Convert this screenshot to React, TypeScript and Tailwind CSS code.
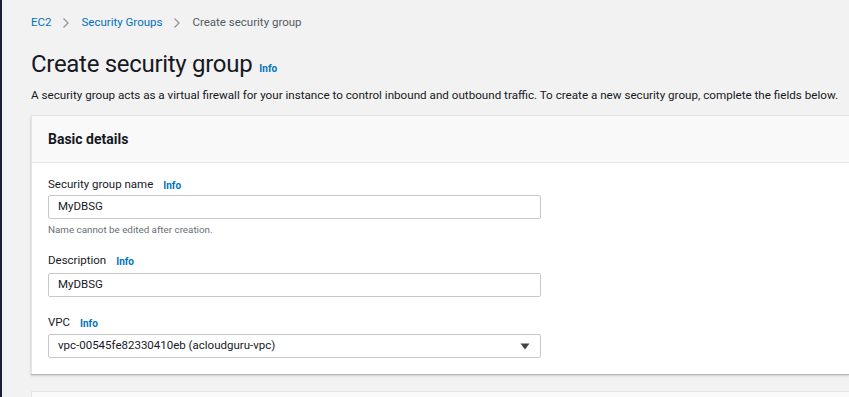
import React from "react";

function Info({ className = "" }: { className?: string }) {
  return (
    <span className={"text-[#0073bb] font-bold text-[10px] " + className}>Info</span>
  );
}

function Chevron() {
  return (
    <svg width="8" height="12" viewBox="0 0 8 12" className="mx-[11px]">
      <path d="M1.5 1.5 L6 6 L1.5 10.5" fill="none" stroke="#8d9399" strokeWidth="1.2" />
    </svg>
  );
}

export default function App() {
  return (
    <div className="h-[397px] w-[849px] overflow-hidden bg-[#f2f2f2] border-l-2 border-[#1b1b3a] font-['Roboto',sans-serif] text-[#16191f]">
      <div className="pl-[29px] pt-[15px]">
        <div className="flex items-center h-[16px] text-[11.5px]">
          <span className="text-[#0073bb]">EC2</span>
          <Chevron />
          <span className="text-[#0073bb]">Security Groups</span>
          <Chevron />
          <span className="text-[#545b64]">Create security group</span>
        </div>
        <div className="flex items-baseline mt-[19px] h-[28px]">
          <h1 className="text-[24px] leading-[28px] tracking-[-0.3px]">Create security group</h1>
          <Info className="ml-[7px]" />
        </div>
        <p className="mt-[9px] text-[11.65px] leading-[16px] text-[#16191f] whitespace-nowrap">
          A security group acts as a virtual firewall for your instance to control inbound and outbound traffic. To create a new security group, complete the fields below.
        </p>
        <div className="mt-[12px] bg-white border-l border-t border-[#e4e4e4] shadow-[0_1px_1px_#b5b5b5,0_2px_3px_rgba(0,0,0,0.12)]">
          <div className="h-[47px] bg-[#f9f9f9] border-b border-[#e6e6e6] flex items-center pl-[16px]">
            <h2 className="text-[14px] font-bold">Basic details</h2>
          </div>
          <div className="pl-[16px] pt-[14px] pb-[16px]">
            <div className="flex items-center h-[16px] text-[11.5px]">
              <span>Security group name</span>
              <Info className="ml-[10px]" />
            </div>
            <div className="mt-[2px] w-[493px] h-[24px] border border-[#c8c8c8] rounded-[2px] flex items-center pl-[9px] text-[11.5px]">
              MyDBSG
            </div>
            <div className="mt-[4px] text-[9.8px] text-[#687078] h-[14px] leading-[14px]">
              Name cannot be edited after creation.
            </div>
            <div className="mt-[16px] flex items-center h-[16px] text-[11.5px]">
              <span>Description</span>
              <Info className="ml-[10px]" />
            </div>
            <div className="mt-[4px] w-[493px] h-[24px] border border-[#c8c8c8] rounded-[2px] flex items-center pl-[9px] text-[11.5px]">
              MyDBSG
            </div>
            <div className="mt-[18px] flex items-center h-[16px] text-[11.5px]">
              <span>VPC</span>
              <Info className="ml-[10px]" />
            </div>
            <div className="mt-[3px] w-[493px] h-[24px] border border-[#c8c8c8] rounded-[2px] flex items-center justify-between pl-[9px] pr-[10px] text-[11.5px]">
              <span>vpc-00545fe82330410eb (acloudguru-vpc)</span>
              <svg width="10" height="7" viewBox="0 0 10 7">
                <path d="M0.5 0.5 L9.5 0.5 L5 6.5 Z" fill="#444" />
              </svg>
            </div>
          </div>
        </div>
        <div className="mt-[17px] h-[20px] bg-[#fafafa] border-l border-t border-[#e4e4e4]" />
      </div>
    </div>
  );
}
